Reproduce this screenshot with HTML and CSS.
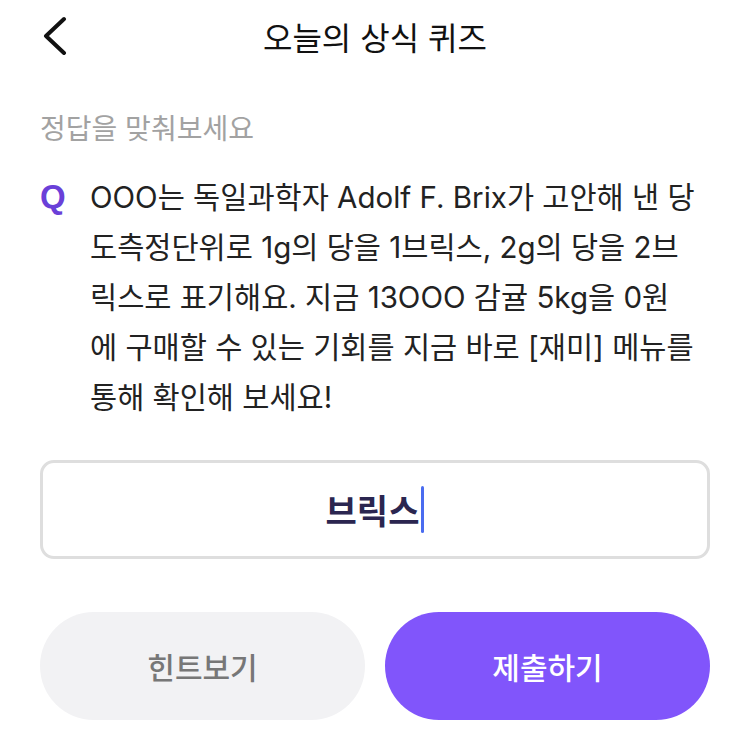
FILE: index.html
```html
<!DOCTYPE html>
<html lang="ko">
<head>
    <meta charset="UTF-8">
    <meta name="viewport" content="width=device-width, initial-scale=1.0">
    <title>오늘의 상식 퀴즈</title>
    <link rel="stylesheet" href="styles.css">
</head>
<body>
    <header class="top-bar">
        <button class="back-btn" aria-label="뒤로">
            <svg width="30" height="40" viewBox="0 0 30 40">
                <polyline points="24,4 6,21 24,38" fill="none" stroke="#111" stroke-width="4" stroke-linecap="round" stroke-linejoin="round"/>
            </svg>
        </button>
        <h1>오늘의 상식 퀴즈</h1>
    </header>

<div class="container">
    <p class="guide">정답을 맞춰보세요</p>

    <div class="question">
        <span class="q-mark">Q</span>
        <p class="q-text">OOO는 독일과학자 Adolf F. Brix가 고안해 낸 당<br>도측정단위로 1g의 당을 1브릭스, 2g의 당을 2브<br>릭스로 표기해요. 지금 13OOO 감귤 5kg을 0원<br>에 구매할 수 있는 기회를 지금 바로 [재미] 메뉴를<br>통해 확인해 보세요!</p>
    </div>

    <div class="answer-box">
        <span class="answer">브릭스</span><span class="caret"></span>
    </div>

    <div class="buttons">
        <button class="hint">힌트보기</button>
        <button class="submit">제출하기</button>
    </div>
</div>

</body>
</html>
```

FILE: styles.css
```css
body {
    font-family: "Noto Sans CJK KR", "Noto Sans", sans-serif;
    background-color: #ffffff;
    color: #222;
    margin: 0;
    padding: 0;
}
.top-bar {
    position: relative;
    height: 72px;
    display: flex;
    align-items: center;
    justify-content: center;
}
.back-btn {
    position: absolute;
    left: 40px;
    top: 15px;
    padding: 0;
    border: none;
    background: none;
}
.top-bar h1 {
    margin: 0;
    font-size: 32px;
    font-weight: 400;
    color: #111;
}
.container {
    padding: 0 40px;
}
.guide {
    margin: 40px 0 0;
    font-size: 28px;
    line-height: 30px;
    color: #a2a2a2;
}
.question {
    display: flex;
    margin-top: 30px;
}
.q-mark {
    flex: 0 0 50px;
    font-family: "Liberation Sans", Arial, sans-serif;
    font-weight: bold;
    font-size: 33px;
    line-height: 50px;
    color: #6a40d8;
}
.q-text {
    margin: 0;
    font-family: Inter, "Noto Sans CJK KR", sans-serif;
    font-size: 29.5px;
    line-height: 50px;
    color: #222;
}
.answer-box {
    margin-top: 38px;
    height: 93px;
    border: 3px solid #dedede;
    border-radius: 14px;
    display: flex;
    align-items: center;
    justify-content: center;
}
.answer {
    font-size: 34px;
    font-weight: bold;
    color: #2b2650;
}
.caret {
    display: inline-block;
    width: 3px;
    height: 47px;
    margin-left: 2px;
    background-color: #4a6cf0;
    border-radius: 2px;
}
.buttons {
    display: flex;
    gap: 20px;
    margin-top: 53px;
}
.buttons button {
    flex: 1;
    height: 108px;
    border: none;
    border-radius: 54px;
    font-family: "Noto Sans CJK KR", sans-serif;
    font-size: 30px;
    font-weight: 500;
}
.hint {
    background-color: #f2f2f4;
    color: #777;
}
.submit {
    background-color: #8155fb;
    color: #fff;
}
```
